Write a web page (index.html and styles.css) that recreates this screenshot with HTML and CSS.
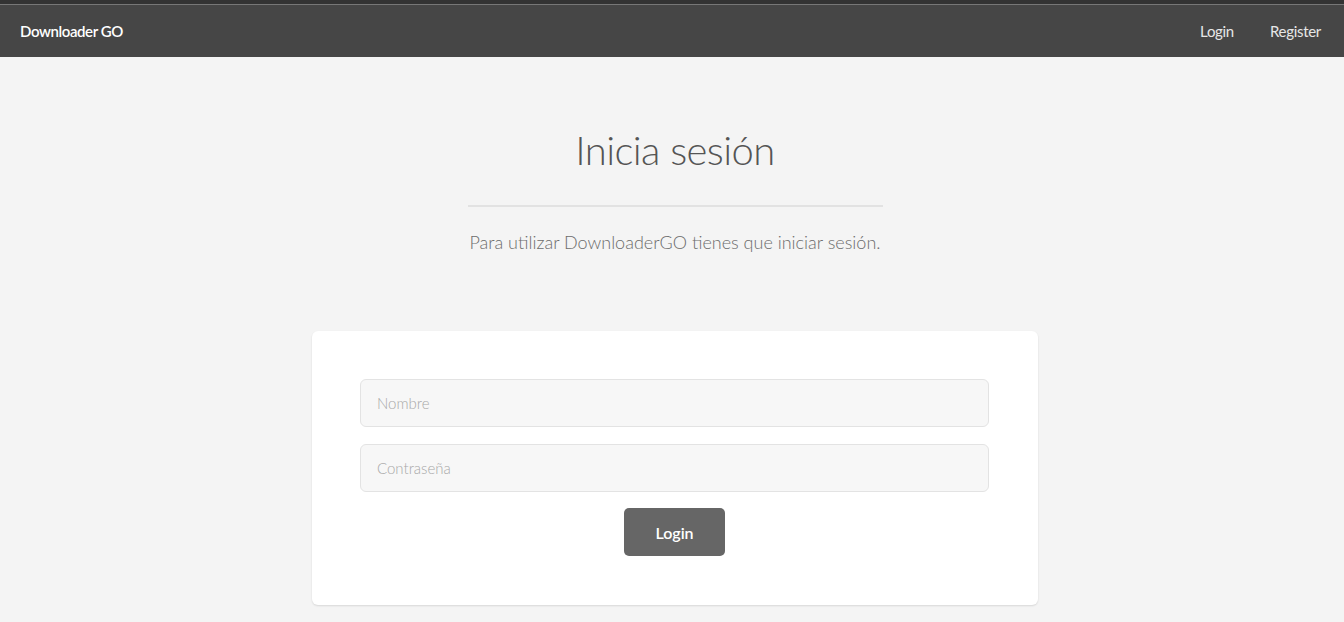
FILE: index.html
```html
<!DOCTYPE html>
<html lang="es">
<head>
<meta charset="utf-8">
<title>Downloader GO</title>
<link rel="stylesheet" href="styles.css">
</head>
<body>
<div class="topline"></div>
<nav class="navbar">
  <a class="brand" href="#">Downloader GO</a>
  <div class="nav-links">
    <a href="#">Login</a>
    <a href="#">Register</a>
  </div>
</nav>
<main class="main">
  <header class="hero">
    <h1 class="title">Inicia sesión</h1>
    <hr class="divider">
    <p class="lead">Para utilizar DownloaderGO tienes que iniciar sesión.</p>
  </header>
  <section class="card">
    <form class="form">
      <input class="field" type="text" placeholder="Nombre">
      <input class="field" type="password" placeholder="Contraseña">
      <button class="btn" type="button">Login</button>
    </form>
  </section>
</main>
</body>
</html>
```
FILE: styles.css
```css
* { box-sizing: border-box; }
html, body { margin: 0; padding: 0; }
body {
  background: #f4f4f4;
  font-family: "Lato", "Open Sans", sans-serif;
  color: #555;
  height: 622px;
  overflow: hidden;
}
.topline {
  height: 5px;
  background: #333;
  border-bottom: 1px solid #777;
}
.navbar {
  height: 52px;
  background: #464646;
  display: flex;
  align-items: center;
  justify-content: space-between;
  padding: 0 23px 0 20px;
}
.brand {
  color: #fff;
  text-decoration: none;
  font-size: 15px;
  font-weight: 600;
  letter-spacing: -0.4px;
}
.nav-links { display: flex; gap: 36px; }
.nav-links a {
  color: #e6e6e6;
  text-decoration: none;
  font-size: 15px;
  letter-spacing: -0.3px;
}
.main {
  display: flex;
  flex-direction: column;
  align-items: center;
  padding-left: 6px;
}
.hero {
  width: 415px;
  text-align: center;
  padding-top: 67px;
}
.title {
  margin: 0;
  font-size: 40px;
  font-weight: 300;
  letter-spacing: -0.6px;
  color: #555;
  line-height: 52px;
}
.divider {
  border: 0;
  border-top: 2px solid #e2e2e2;
  margin: 29px 0 24px;
}
.lead {
  margin: 0;
  font-size: 18px;
  font-weight: 300;
  color: #6c6c6c;
  white-space: nowrap;
}
.card {
  margin-top: 78px;
  width: 726px;
  background: #fff;
  border-radius: 6px;
  box-shadow: 0 1px 2px rgba(0,0,0,0.12);
  padding: 48px 49px 49px 48px;
}
.form {
  display: flex;
  flex-direction: column;
  align-items: center;
  gap: 17px;
}
.field {
  width: 100%;
  height: 48px;
  border: 1px solid #e3e3e3;
  border-radius: 6px;
  background: #f7f7f7;
  padding: 0 16px;
  font-family: inherit;
  font-size: 15px;
  font-weight: 300;
  color: #555;
}
.field::placeholder { color: #a8a8a8; }
.btn {
  width: 101px;
  height: 48px;
  border: 0;
  border-radius: 5px;
  background: #666;
  color: #fff;
  font-family: inherit;
  font-size: 16px;
  font-weight: 600;
  margin-top: -1px;
}
```
